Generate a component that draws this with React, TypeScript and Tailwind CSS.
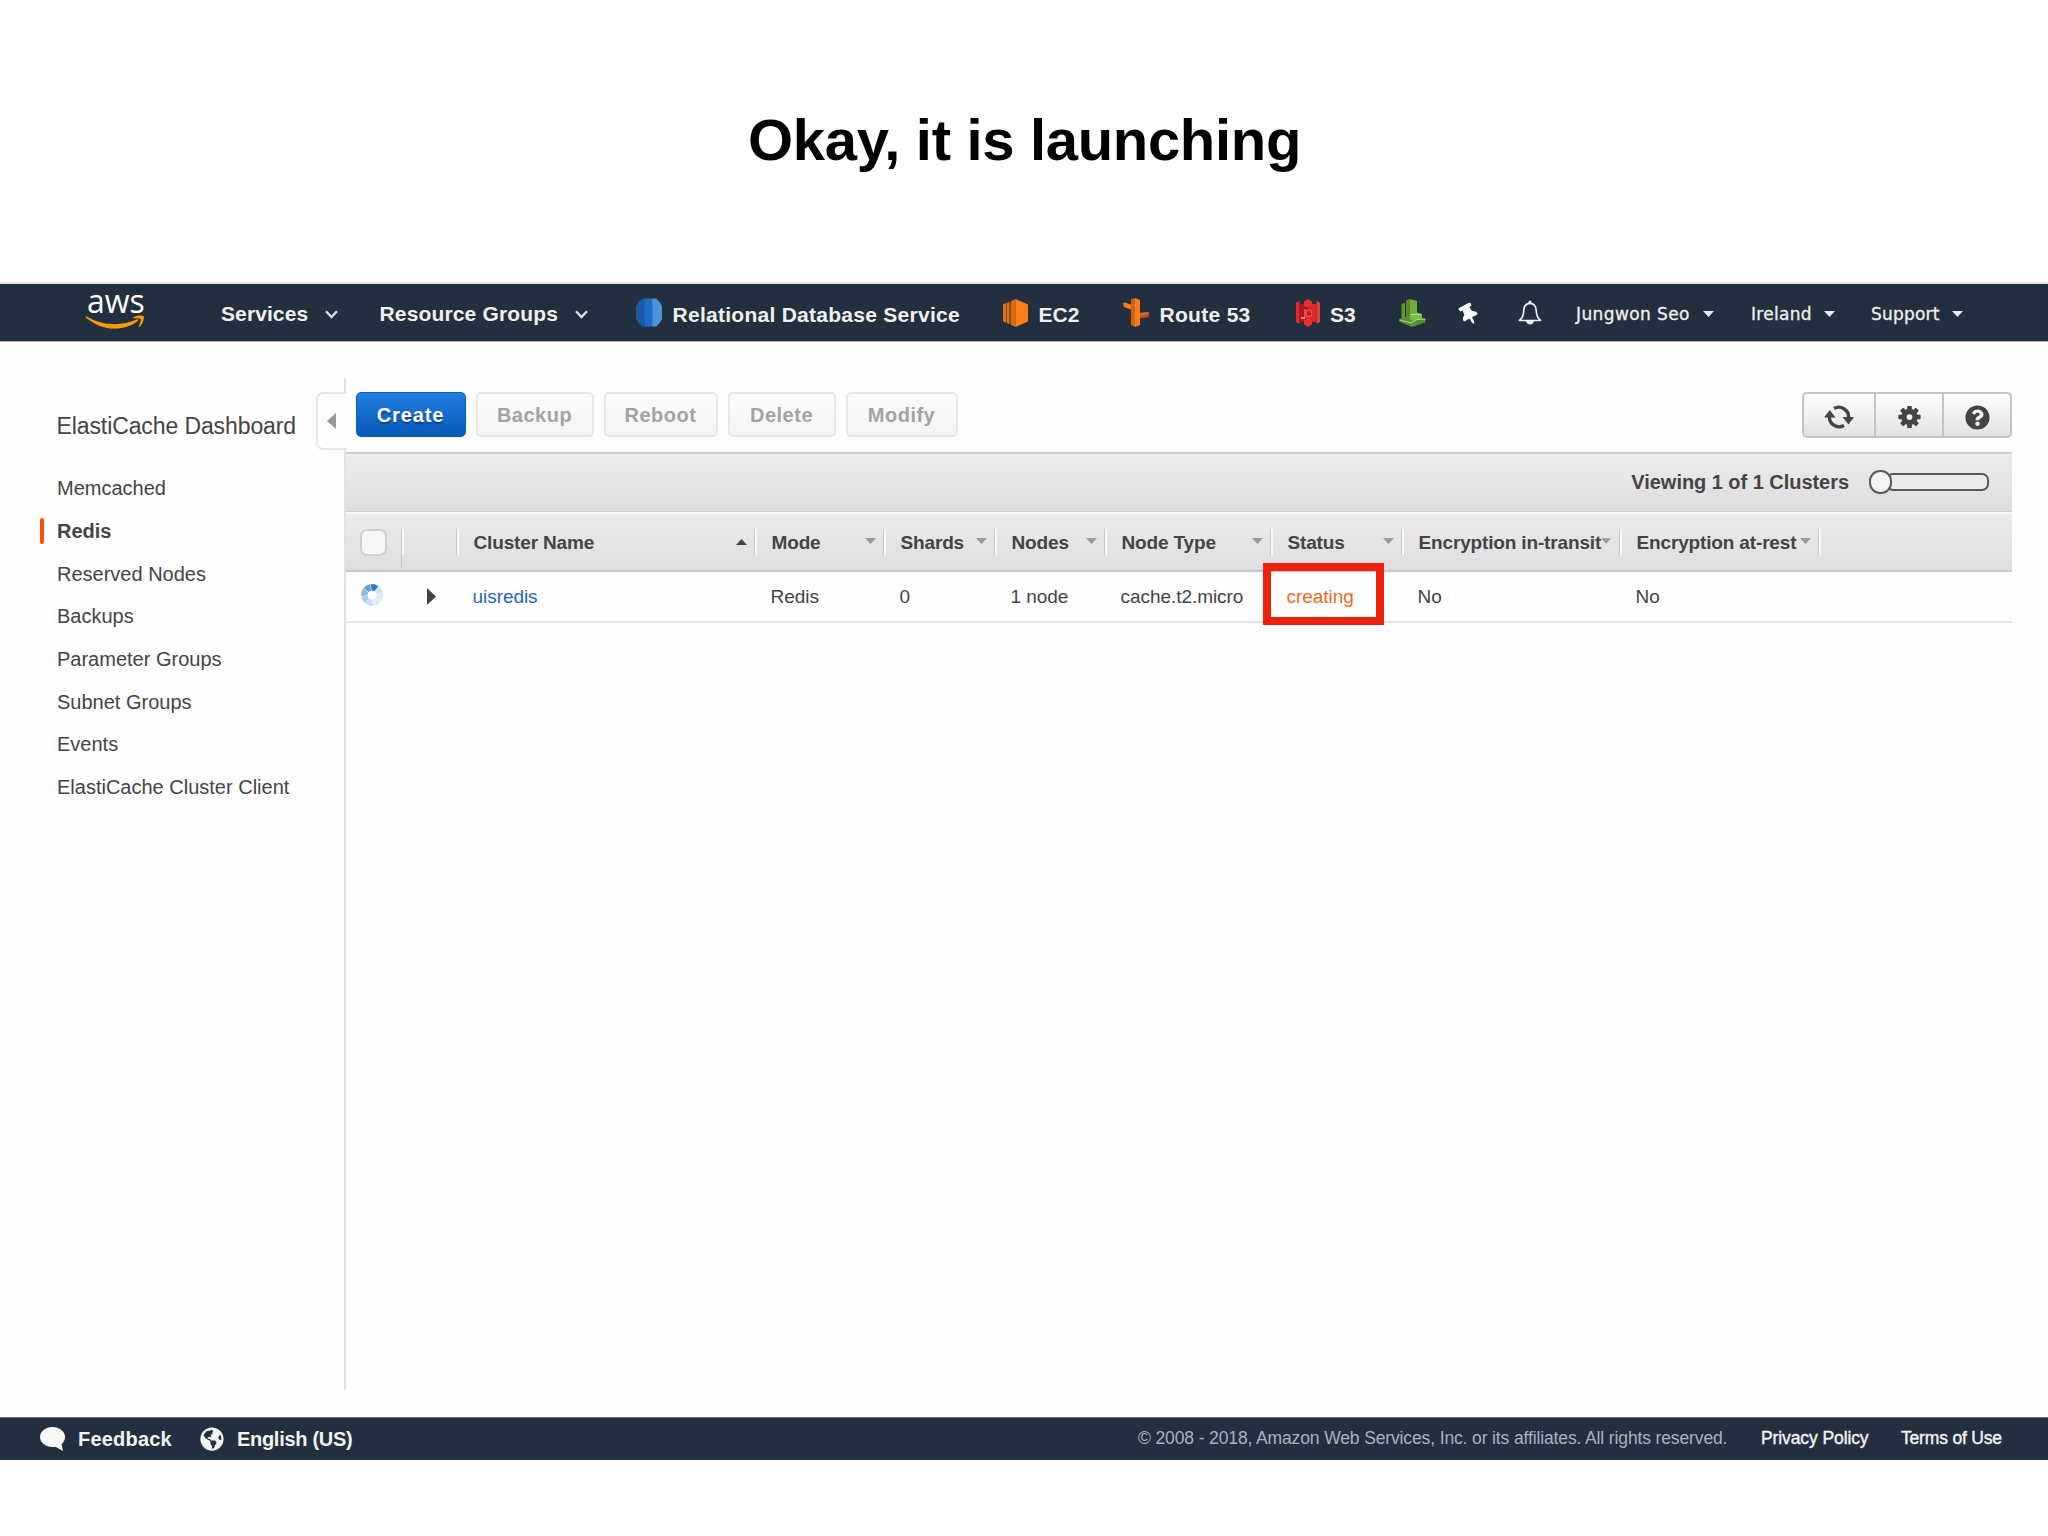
import { FaGlobeAmericas, FaQuestionCircle, FaThumbtack } from "react-icons/fa";
import clsx from "clsx";

const MENU = [
  "Memcached",
  "Redis",
  "Reserved Nodes",
  "Backups",
  "Parameter Groups",
  "Subnet Groups",
  "Events",
  "ElastiCache Cluster Client",
];

const ACTIONS = [
  { label: "Backup", className: "ml-[10px] w-[118px]" },
  { label: "Reboot", className: "ml-[10px] w-[114px]" },
  { label: "Delete", className: "ml-[10px] w-[108px]" },
  { label: "Modify", className: "ml-[10px] w-[112px]" },
];

type Column = { title: string; value: string; sort?: "asc" };

const COLUMNS: Column[] = [
  { title: "Cluster Name", value: "uisredis", sort: "asc" },
  { title: "Mode", value: "Redis" },
  { title: "Shards", value: "0" },
  { title: "Nodes", value: "1 node" },
  { title: "Node Type", value: "cache.t2.micro" },
  { title: "Status", value: "creating" },
  { title: "Encryption in-transit", value: "No" },
  { title: "Encryption at-rest", value: "No" },
];

const GRID = "grid grid-cols-[57px_55px_298px_129px_111px_110px_166px_131px_218px_199px_1fr]";

function AwsLogo() {
  return (
    <div className="relative ml-[85px] h-[36px] w-[60px] shrink-0 text-white">
      <span className="absolute left-[2px] top-[-12px] font-['Open_Sans'] text-[32px] leading-[36px] font-medium">aws</span>
      <svg className="absolute left-0 top-[20px]" width="60" height="16" viewBox="0 0 60 16" fill="#f90">
        <path d="M.6 2.2C.2 1.4 1 1 1.7 1.5 18 11 36 11.500 52 4.300c1.200-.5 2 .5 1 1.400C40 16.500 17 17 .6 2.200z" />
        <path d="M48.500 2.200c2.600-1.900 9-2.300 10.100-1 1 1.300-.8 8-4 10.600-.6.400-1 .1-.8-.5.900-2 2.500-6.200 1.800-7.300-.8-1-4.800-.8-6.700-.6-.8.1-.9-.7-.4-1.200z" />
      </svg>
    </div>
  );
}

function Chevron({ className }: { className?: string }) {
  return (
    <svg className={clsx("shrink-0", className)} width="13" height="9" viewBox="0 0 13 9" fill="none" stroke="#dfe3e8" strokeWidth="2.300">
      <path d="M1 1.200l5.500 5.800L12 1.200" />
    </svg>
  );
}

function Caret({ className }: { className?: string }) {
  return (
    <svg className={clsx("shrink-0", className)} width="11" height="6" viewBox="0 0 11 6" fill="#e6e9ed">
      <path d="M0 0h11L5.500 6z" />
    </svg>
  );
}

function RdsIcon() {
  return (
    <svg className="ml-[48px] shrink-0" width="26" height="29" viewBox="0 0 27 29">
      <path d="M7 0H14V29H7L3 26 0 21V8L3 3z" fill="#1b5aa3" />
      <path d="M9 0H18V29H9z" fill="#1f6cc4" />
      <path d="M17 0H21L25 4 27 8V21L25 25 21 29H17z" fill="#4b93dc" />
    </svg>
  );
}

function Ec2Icon() {
  return (
    <svg className="ml-[43px] shrink-0" width="25" height="28" viewBox="0 0 25 28">
      <path d="M0 5.500L3 4v20l-3-2z" fill="#e0701a" />
      <path d="M4 4l2.500-1.500v23L4 24z" fill="#e0701a" />
      <path d="M3 5h1v18H3zM6.500 4H8v20H6.500z" fill="#9a4a10" />
      <path d="M8 2l4.500-2v28L8 26z" fill="#d96a14" />
      <path d="M12.500 0L25 5.500v17L12.500 28z" fill="#ff7d14" />
    </svg>
  );
}

function RouteIcon() {
  return (
    <svg className="ml-[42px] shrink-0" width="27" height="29" viewBox="0 0 27 29">
      <path d="M0 5l2-.5 7 2.500v5L1 9z" fill="#f57c1c" />
      <path d="M16 16l10-2v5l-10 1.500z" fill="#b85610" />
      <path d="M16 15l8-1 3 1.500-10 2.500z" fill="#d96a14" />
      <path d="M8 1.500L12 0v29l-4-2z" fill="#d3640f" />
      <path d="M12 0l5 2v25l-5 2z" fill="#ff7d14" />
    </svg>
  );
}

function S3Icon() {
  return (
    <svg className="ml-[43px] shrink-0" width="24" height="28" viewBox="0 0 24 28">
      <path d="M0 3.500L3.500 2v23L0 23z" fill="#e02a2c" />
      <path d="M24 3.500L20.500 2v23l3.500-2z" fill="#f03c3e" />
      <path d="M3.500 5H12v18H3.500z" fill="#a81c20" />
      <path d="M12 5h8.500v18H12z" fill="#d8282b" />
      <path d="M8 2.500L12 0l4 2.500V7l-4 1.500L8 7z" fill="#e8302f" />
      <path d="M8 21l4-1.500 4 1.500v4.500L12 28l-4-2.500z" fill="#e8302f" />
      <path d="M8 10l8 1v7l-8 1z" fill="#f04446" />
      <path d="M11 12l4 .5v3.500l-4 .5z" fill="#b01f22" />
      <path d="M5 18l4 .5v1.500l-4-.5z" fill="#f7a0a0" />
    </svg>
  );
}

function GreenIcon() {
  return (
    <svg className="ml-[42px] shrink-0" width="27" height="28" viewBox="0 0 27 28">
      <path d="M0 20l13-4 14 4-1 3.500L13 28 0 22.500z" fill="#5a8f2c" />
      <path d="M2.500 5L6 4v16l-3.500-.5z" fill="#5f9a30" />
      <path d="M7 1.500L10.500 0v21L7 20z" fill="#568a2a" />
      <path d="M10.500 0L18 2v18l-7.500 1z" fill="#6fae3a" />
      <path d="M11 16l7-2.500 5 1.500v4l-10 3z" fill="#7dbb4a" />
      <path d="M1 21l11 3 6-3.500 8-.5" fill="none" stroke="#b4dc8c" strokeWidth="1" />
      <path d="M11 15.500h11" stroke="#b4dc8c" strokeWidth="1" />
    </svg>
  );
}

function BellIcon() {
  return (
    <svg className="ml-[39px] shrink-0" width="24" height="25" viewBox="0 0 24 25">
      <path
        d="M1.500 20.500c3-2.500 4-4.500 4.200-9.500C5.900 6 8.500 3.300 12 3.300S18.100 6 18.300 11c.2 5 1.200 7 4.200 9.500z"
        fill="none"
        stroke="#eef0f3"
        strokeWidth="1.700"
        strokeLinejoin="round"
      />
      <circle cx="12" cy="2" r="1.600" fill="#eef0f3" />
      <path d="M8 21h8c-.3 2.200-2 3.600-4 3.600S8.300 23.200 8 21z" fill="#eef0f3" />
    </svg>
  );
}

function NavBar() {
  return (
    <nav className="flex h-[60px] items-center border-b border-t-2 border-b-[#b5b0b0] border-t-[#e4e0e0] bg-[#222f3e] text-[21px] leading-none font-bold whitespace-nowrap text-[#f0f0f0]">
      <AwsLogo />
      <span className="ml-[76px] w-[104px] pt-px tracking-[0.1px]">Services</span>
      <Chevron className="mt-1" />
      <span className="ml-[41.500px] w-[195px] pt-px tracking-[0.15px]">Resource Groups</span>
      <Chevron className="mt-1" />
      <RdsIcon />
      <span className="ml-[11px] w-[287px] pt-1 tracking-[0.270px]">Relational Database Service</span>
      <Ec2Icon />
      <span className="ml-[11px] w-[42px] pt-1">EC2</span>
      <RouteIcon />
      <span className="ml-[10px] w-[93px] pt-1 tracking-[0.3px]">Route 53</span>
      <S3Icon />
      <span className="ml-[10.500px] w-[27px] pt-1">S3</span>
      <GreenIcon />
      <FaThumbtack className="mt-[3px] ml-[33px] h-[21px] w-[20px] shrink-0 -rotate-[28deg] text-white" />
      <BellIcon />
      <div className="ml-[34px] flex items-center pt-[3px] font-['DejaVu_Sans'] text-[17px] font-normal [-webkit-text-stroke:0.300px_#f0f0f0]">
        <span className="w-[127px] tracking-[0.4px]">Jungwon Seo</span>
        <Caret />
        <span className="ml-[37px] w-[73px] tracking-[0.3px]">Ireland</span>
        <Caret />
        <span className="ml-[36px] w-[81px] tracking-[0.2px]">Support</span>
        <Caret />
      </div>
    </nav>
  );
}

function Sidebar() {
  return (
    <aside className="w-[344px] shrink-0 pt-[69px] text-[#444]">
      <h2 className="pl-[56.500px] text-[23px] leading-[30px] tracking-[-0.1px]">ElastiCache Dashboard</h2>
      <ul className="mt-[26px] text-[20px]">
        {MENU.map((item) => {
          const active = item === "Redis";
          return (
            <li key={item} className="flex h-[42.67px] items-center pl-[40px]">
              <span className={clsx("h-[26px] w-1 rounded-xs", active && "bg-[#ff4f00]")} />
              <span className={clsx("ml-[13px]", active && "font-bold")}>{item}</span>
            </li>
          );
        })}
      </ul>
    </aside>
  );
}

function RefreshIcon() {
  return (
    <svg width="30" height="28" viewBox="0 0 30 28" fill="none" stroke="#444" strokeWidth="3.400">
      <path d="M10 5.500A9.800 9.800 0 0 1 24.600 14.500" />
      <path d="M20 22.500A9.800 9.800 0 0 1 5.400 13.500" />
      <path d="M18.500 14H30l-5.500 7.500z" fill="#444" stroke="none" />
      <path d="M0 14.500h11.500L5.800 7z" fill="#444" stroke="none" />
    </svg>
  );
}

function GearIcon() {
  return (
    <svg width="23" height="24" viewBox="-12 -12 24 24" fill="#444">
      {[0, 45, 90, 135].map((a) => (
        <rect key={a} x="-2.400" y="-11.600" width="4.800" height="23.200" rx="1" transform={`rotate(${a})`} />
      ))}
      <circle r="8.600" />
      <circle r="3" fill="#f1f0f2" />
    </svg>
  );
}

function Toolbar() {
  return (
    <div className="flex h-[74px] items-start pt-[14px] pl-[9.500px] text-[20px] font-bold">
      <button className="h-[45px] w-[110px] rounded-[5px] border border-[#0f5cb4] bg-linear-to-b from-[#1f7fe0] to-[#0a59b8] tracking-[0.9px] text-white [text-shadow:0_2px_2px_rgba(0,0,0,0.4)]">
        Create
      </button>
      {ACTIONS.map((a) => (
        <button
          key={a.label}
          className={clsx(
            "h-[45px] rounded-[5px] border-2 border-[#e8e6e9] bg-linear-to-b from-[#fdfcfd] to-[#f4f3f5] tracking-[0.5px] text-[#a3a3a3]",
            a.className
          )}
        >
          {a.label}
        </button>
      ))}
      <div className="ml-auto flex h-[46px] w-[210px] rounded-[5px] border-2 border-[#c5c3c6] bg-linear-to-b from-[#fdfdfd] to-[#e4e2e5]">
        <button className="flex w-[72px] items-center justify-center border-r-2 border-[#c5c3c6] pt-1">
          <RefreshIcon />
        </button>
        <button className="flex w-[68px] items-center justify-center border-r-2 border-[#c5c3c6] pt-[3px]">
          <GearIcon />
        </button>
        <button className="flex flex-1 items-center justify-center pt-1">
          <FaQuestionCircle className="size-[25px] text-[#444]" />
        </button>
      </div>
    </div>
  );
}

function Separator() {
  return <span className="absolute -right-px top-[15px] h-[26px] w-[3px] border-r-2 border-l border-r-[#faf9fa] border-l-[#c9c7ca]" />;
}

function Spinner() {
  const shades = ["#2f7bd0", "#cfe4f5", "#d9eaf7", "#dcecf8", "#c4ddf3", "#a9ccee", "#8dbbe8", "#5f9fdf"];
  return (
    <svg width="22" height="22" viewBox="-11 -11 22 22">
      {shades.map((c, i) => (
        <path key={c} d="M-3.900 -10.200A11 11 0 0 1 3.900 -10.200L1.500 -4.200A4.500 4.500 0 0 0 -1.500 -4.200z" fill={c} transform={`rotate(${i * 45 + 15})`} />
      ))}
    </svg>
  );
}

function ClusterTable() {
  return (
    <div className="text-[19px] leading-none whitespace-nowrap text-[#444]">
      <div className="flex h-[60px] items-center justify-end border-t-2 border-b border-t-[#d0ced1] border-b-[#cfcdd0] bg-linear-to-b from-[#eeecef] to-[#dedcdf] pr-[23px] pb-[2px] text-[20px] font-bold">
        <span className="tracking-[-0.040px]">Viewing 1 of 1 Clusters</span>
        <div className="ml-[20px] flex h-[24px] w-[120px] items-center">
          <span className="z-10 h-[24px] w-[23px] rounded-[11px] border-2 border-[#5a5a5a] bg-[#f3f2f4]" />
          <span className="-ml-[6px] h-[18px] flex-1 rounded-[7px] border-2 border-[#5a5a5a] bg-[#ebeaec]" />
        </div>
      </div>

      <div className={clsx(GRID, "h-[60px] border-t-2 border-b-2 border-t-[#f8f7f8] border-b-[#c9c7ca] bg-linear-to-b from-[#edebee] to-[#dfdde0] font-bold")}>
        <div className="relative flex items-center pl-[14px]">
          <span className="size-[27px] rounded-[7px] border-2 border-[#cfcdd0] bg-[#f6f5f7]" />
          <Separator />
          <span className="absolute right-px bottom-[2px] h-[14px] w-px bg-[#c9c7ca]" />
        </div>
        <div className="relative">
          <Separator />
        </div>
        {COLUMNS.map((c) => (
          <div key={c.title} className="relative flex items-center justify-between pr-[9.500px] pl-[15.500px]">
            <span className="tracking-[-0.150px]">{c.title}</span>
            <svg width="11" height="6" viewBox="0 0 11 6" className={c.sort ? "mb-px text-[#444]" : "mb-[2px] text-[#999]"} fill="currentColor">
              <path d={c.sort ? "M0 6h11L5.500 0z" : "M0 0h11L5.500 6z"} />
            </svg>
            <Separator />
          </div>
        ))}
      </div>

      <div className={clsx(GRID, "h-[51px] items-center border-b-2 border-[#e2e2e3]")}>
        <div className="pl-[15px] pb-[3px]">
          <Spinner />
        </div>
        <svg className="ml-[23.500px]" width="9" height="17" viewBox="0 0 9 17" fill="#444">
          <path d="M0 0l9 8.500L0 17z" />
        </svg>
        {COLUMNS.map((c) => (
          <div
            key={c.title}
            className={clsx(
              "relative pl-[14.500px]",
              c.title === "Cluster Name" && "text-[#1f66c0]",
              c.title === "Status" && "text-[#ec6a1f]"
            )}
          >
            <span className="tracking-[-0.050px]">{c.value}</span>
            {c.title === "Status" && (
              <span className="absolute -top-[24px] -left-[9px] h-[62px] w-[121px] border-8 border-[#ee220c]" />
            )}
          </div>
        ))}
      </div>
    </div>
  );
}

function Footer() {
  return (
    <footer className="flex h-[43px] items-center border-t border-[#5d7180] bg-[#222f3e] text-[20px] leading-none font-bold whitespace-nowrap text-[#f2f2f2]">
      <svg className="ml-[40px]" width="26" height="24" viewBox="0 0 26 24" fill="#f8f8fb">
        <path d="M12.500 0C19.500 0 25 4.500 25 10c0 3-1.500 5.500-3.500 7.300L23 24l-7.500-4.300c-1 .2-2 .3-3 .3C5.500 20 0 15.500 0 10S5.500 0 12.500 0z" />
      </svg>
      <span className="ml-[12px] w-[110px] tracking-[0.2px]">Feedback</span>
      <FaGlobeAmericas className="ml-[12px] size-[24px] text-[#f8f8fb]" />
      <span className="ml-[13px] tracking-[-0.300px]">English (US)</span>
      <div className="ml-auto flex pr-[45px] text-[17.500px] font-normal">
        <span className="w-[623px] tracking-[-0.130px] text-[#a9b3bd]">
          © 2008 - 2018, Amazon Web Services, Inc. or its affiliates. All rights reserved.
        </span>
        <span className="w-[140px] tracking-[-0.100px] [-webkit-text-stroke:0.400px_#f2f2f2]">Privacy Policy</span>
        <span className="w-[102px] tracking-[-0.180px] [-webkit-text-stroke:0.400px_#f2f2f2]">Terms of Use</span>
      </div>
    </footer>
  );
}

export default function App() {
  return (
    <div className="h-[1536px] w-[2048px] overflow-hidden bg-white font-['Liberation_Sans',Arial,sans-serif]">
      <h1 className="flex h-[282px] items-center justify-center pb-[4px] pl-px text-[58px] font-bold tracking-[-0.320px] text-black">
        Okay, it is launching
      </h1>
      <NavBar />
      <div className="flex h-[1075px] bg-[#fefefe]">
        <Sidebar />
        <main className="relative mt-[36px] h-[1012px] w-[1668px] border-l-2 border-[#e2e2e3]">
          <div className="absolute top-[14px] -left-[30px] flex h-[58px] w-[31px] items-center rounded-l-[7px] border-2 border-r-0 border-[#e6e6e8] bg-[#fefefe] pl-[9px]">
            <svg width="9" height="16" viewBox="0 0 9 16" fill="#999">
              <path d="M9 0v16L0 8z" />
            </svg>
          </div>
          <Toolbar />
          <ClusterTable />
        </main>
      </div>
      <Footer />
    </div>
  );
}
